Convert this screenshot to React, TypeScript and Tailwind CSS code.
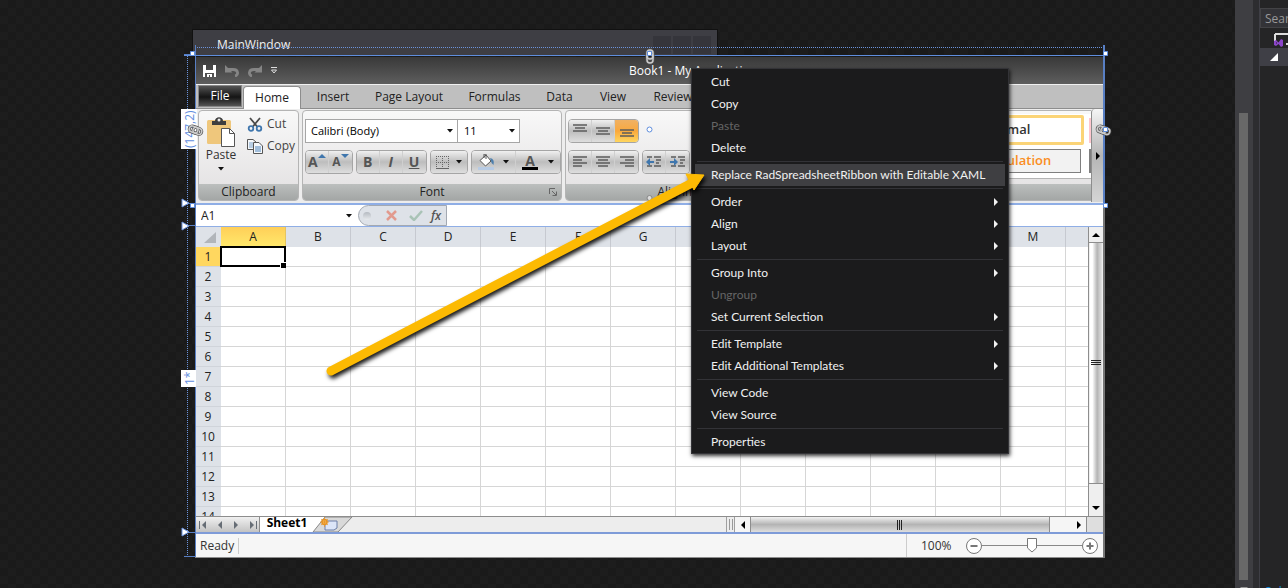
import { useState, type ReactNode } from 'react';

const COLUMNS = ['A', 'B', 'C', 'D', 'E', 'F', 'G', 'H', 'I', 'J', 'K', 'L', 'M', ''];
const ROWS = Array.from({ length: 14 }, (_, i) => i + 1);
const TABS = [
  { name: 'Insert', width: 'w-[62px]' },
  { name: 'Page Layout', width: 'w-[90px]' },
  { name: 'Formulas', width: 'w-[81px]' },
  { name: 'Data', width: 'w-[49px]' },
  { name: 'View', width: 'w-[58px]' },
  { name: 'Review', width: 'w-[62px]' },
];

type MenuEntry = { label: string; disabled?: boolean; submenu?: boolean; active?: boolean };

const MENU: MenuEntry[][] = [
  [{ label: 'Cut' }, { label: 'Copy' }, { label: 'Paste', disabled: true }, { label: 'Delete' }],
  [{ label: 'Replace RadSpreadsheetRibbon with Editable XAML', active: true }],
  [
    { label: 'Order', submenu: true },
    { label: 'Align', submenu: true },
    { label: 'Layout', submenu: true },
  ],
  [
    { label: 'Group Into', submenu: true },
    { label: 'Ungroup', disabled: true },
    { label: 'Set Current Selection', submenu: true },
  ],
  [
    { label: 'Edit Template', submenu: true },
    { label: 'Edit Additional Templates', submenu: true },
  ],
  [{ label: 'View Code' }, { label: 'View Source' }],
  [{ label: 'Properties' }],
];

function Triangle({ dir, className = '' }: { dir: 'up' | 'down' | 'left' | 'right'; className?: string }) {
  const paths = {
    up: 'M0 6 L4 2 L8 6Z',
    down: 'M0 2 L8 2 L4 6Z',
    left: 'M6 0 L2 4 L6 8Z',
    right: 'M2 0 L6 4 L2 8Z',
  };
  return (
    <svg viewBox="0 0 8 8" className={`w-2 h-2 shrink-0 ${className}`} fill="currentColor">
      <path d={paths[dir]} />
    </svg>
  );
}

function DropArrow() {
  return (
    <svg viewBox="0 0 6 4" className="w-[6px] h-1 shrink-0" fill="#111">
      <path d="M0 0H6L3 3.5Z" />
    </svg>
  );
}

function ToolGroup({ children }: { children: ReactNode }) {
  return (
    <div className="flex h-6 rounded-sm border border-[#a5a5a5] divide-x divide-[#cfcfcf] overflow-hidden">
      {children}
    </div>
  );
}

function Tool({ label, children, className = 'w-[23px]' }: { label: string; children: ReactNode; className?: string }) {
  return (
    <button
      aria-label={label}
      className={`flex items-center justify-center bg-linear-to-b from-[#f0f0f0] from-0% via-[#bdbdbd] via-50% to-[#dedede] ${className}`}
    >
      {children}
    </button>
  );
}

function Lines({ d }: { d: string }) {
  return (
    <svg viewBox="0 0 16 14" className="w-4 h-[14px]" stroke="#5c5c5c" strokeWidth="1.4" fill="none">
      <path d={d} />
    </svg>
  );
}

function Group({ title, className, launcher, children }: { title: string; className: string; launcher?: boolean; children: ReactNode }) {
  return (
    <section
      className={`flex flex-col h-[91px] rounded-sm border border-[#b4b4b4] bg-linear-to-b from-[#f8f8f8] to-[#e2e0e1] overflow-hidden ${className}`}
    >
      <div className="flex-1 min-h-0">{children}</div>
      <div className="relative h-4 shrink-0 flex items-center justify-center bg-linear-to-b from-[#bcbfbe] to-[#a3a6a5] text-[#222] whitespace-nowrap">
        {title}
        {launcher && (
          <svg viewBox="0 0 8 8" className="absolute right-1 w-2 h-2" stroke="#666" fill="none">
            <path d="M.5 6V.5H6M3 3L7 7M7.5 3.5V7.5H3.5" />
          </svg>
        )}
      </div>
    </section>
  );
}

function TitleBar() {
  return (
    <div className="relative h-7 flex items-center pl-2 gap-[9px] bg-linear-to-b from-[#393939] to-[#5e5e5e] border-b border-[#f0f0f0]">
      <button aria-label="Save">
        <svg viewBox="0 0 13 12" className="w-[13px] h-3" fill="#fff">
          <path d="M0 0H3V5H10V0H13V12H11V8H2V12H0ZM4 9H9V12H7V10H6V12H4Z" />
        </svg>
      </button>
      <button aria-label="Undo">
        <svg viewBox="0 0 14 12" className="w-[14px] h-3" fill="none" stroke="#858585" strokeWidth="2.8">
          <path d="M3 4.5H8C14 4.500 13.500 10.500 10 11" />
          <path d="M0 0V7.500H7.500Z" fill="#858585" stroke="none" />
        </svg>
      </button>
      <button aria-label="Redo">
        <svg viewBox="0 0 14 12" className="w-[14px] h-3" fill="none" stroke="#858585" strokeWidth="2.8">
          <path d="M11 4.500H6C0 4.500 .5 10.500 4 11" />
          <path d="M14 0V7.500H6.500Z" fill="#858585" stroke="none" />
        </svg>
      </button>
      <button aria-label="Customize toolbar">
        <svg viewBox="0 0 6 7" className="w-[6px] h-[7px]" fill="none" stroke="#ddd">
          <path d="M0 .5H6M.5 3H5.500L3 6Z" />
        </svg>
      </button>
      <h1 className="absolute inset-x-0 pl-[88px] text-center text-white">Book1 - My Application</h1>
    </div>
  );
}

function RibbonTabs() {
  return (
    <div role="tablist" className="flex items-end h-6 pl-[3px] bg-[#bfbfbf] border-b border-[#8d8d8d]">
      <button role="tab" className="w-11 h-[22px] mr-px mb-px text-white bg-linear-to-b from-[#555] from-0% via-[#151515] via-55% to-[#555] border border-[#888]">
        File
      </button>
      <button role="tab" aria-selected="true" className="w-[58px] h-[23px] -mb-px mr-px rounded-t-sm border border-b-0 border-[#8d8d8d] bg-white text-[#222]">
        Home
      </button>
      {TABS.map((tab) => (
        <button key={tab.name} role="tab" className={`h-[22px] text-[#222] text-center whitespace-nowrap ${tab.width}`}>
          {tab.name}
        </button>
      ))}
    </div>
  );
}

function Ribbon() {
  return (
    <div className="flex h-[94px] pl-[3px] pt-px bg-[#ededed] overflow-hidden">
      <Group title="Clipboard" className="w-[101px] mr-[3px] shrink-0">
        <div className="flex pl-2 pt-[5px]">
          <button className="flex flex-col items-center w-7 text-[#333]">
            <svg viewBox="0 0 28 31" className="w-7 h-[31px]">
              <rect x="0" y="4" width="24" height="24" rx="1.500" fill="#efc77c" />
              <path d="M5 9V5H8C8 0 16 0 16 5H19V9Z" fill="#3f3f3f" />
              <circle cx="12" cy="4" r="1.500" fill="#eee" />
              <path d="M14.500 12.500H22.500L27.500 17.500V30.500H14.500Z" fill="#fff" stroke="#555" />
              <path d="M22.500 12.500V17.500H27.500" fill="none" stroke="#555" />
            </svg>
            <span className="leading-4 mb-1">Paste</span>
            <DropArrow />
          </button>
          <div className="flex flex-col ml-3 gap-[6px]">
            <button className="flex items-center gap-1 h-4 text-[#444]">
              <svg viewBox="0 0 16 15" className="w-4 h-[15px]" fill="none" strokeWidth="1.800">
                <path d="M3 1L10.500 10M13 1L5.500 10" stroke="#4a4a4a" />
                <circle cx="4" cy="11.500" r="2.300" stroke="#3f76ad" />
                <circle cx="12" cy="11.500" r="2.300" stroke="#3f76ad" />
              </svg>
              Cut
            </button>
            <button className="flex items-center gap-1 h-4 text-[#444]">
              <svg viewBox="0 0 16 15" className="w-4 h-[15px]" fill="#f5f8fb" stroke="#555">
                <path d="M.5 .5H6L9.500 3.500V10.500H.5Z" />
                <path d="M2 4H6M2 6H6M2 8H6" stroke="#7aa3cc" />
                <path d="M6.500 3.500H12L15.500 7V14.500H6.500Z" />
                <path d="M8 8H14M8 10H14M8 12H14" stroke="#4c83bb" />
              </svg>
              Copy
            </button>
          </div>
        </div>
      </Group>

      <Group title="Font" launcher className="w-[260px] mr-[3px] shrink-0">
        <div className="flex pl-[2px] pt-2 text-[11px]">
          <label className="flex items-center w-[153px] h-6 pr-1 bg-white border border-[#a6a6a6]">
            <select aria-label="Font family" className="appearance-none flex-1 min-w-0 pl-[5px] outline-none text-black">
              <option>Calibri (Body)</option>
            </select>
            <DropArrow />
          </label>
          <label className="flex items-center w-[63px] h-6 pr-1 -ml-px bg-white border border-[#a6a6a6]">
            <select aria-label="Font size" className="appearance-none flex-1 min-w-0 pl-[6px] outline-none text-black">
              <option>11</option>
            </select>
            <DropArrow />
          </label>
        </div>
        <div className="flex gap-[3px] pl-[2px] pt-[7px] font-bold text-sm text-[#555]">
          <ToolGroup>
            <Tool label="Grow font">
              A<Triangle dir="up" className="text-[#3f76ad] -mt-3" />
            </Tool>
            <Tool label="Shrink font">
              <span className="text-xs">A</span>
              <Triangle dir="down" className="text-[#3f76ad] -mt-3" />
            </Tool>
          </ToolGroup>
          <ToolGroup>
            <Tool label="Bold">B</Tool>
            <Tool label="Italic"><i>I</i></Tool>
            <Tool label="Underline"><u>U</u></Tool>
          </ToolGroup>
          <ToolGroup>
            <Tool label="Borders" className="w-[37px] gap-[7px]">
              <svg viewBox="0 0 13 13" className="w-[13px] h-[13px]" fill="none" stroke="#666">
                <path d="M.5 0V12M12.500 0V12M6.500 0V12M0 .5H13M0 6.500H13" strokeDasharray="1 1" />
                <path d="M0 12.500H13" />
              </svg>
              <DropArrow />
            </Tool>
          </ToolGroup>
          <ToolGroup>
            <Tool label="Fill color" className="w-[44px] gap-2">
              <svg viewBox="0 0 17 16" className="w-[17px] h-4">
                <path d="M8 1L13 7L7.500 12L2 6.500Z" fill="#fff" stroke="#555" />
                <path d="M6 4V0H8V5" fill="none" stroke="#555" />
                <path d="M12 4Q17 5 15.500 11Q13 9 13 7Z" fill="#4c7fae" />
                <rect x="0" y="13" width="16" height="3" fill="#b7cbe4" />
              </svg>
              <DropArrow />
            </Tool>
            <Tool label="Font color" className="w-[44px] gap-[10px]">
              <span className="leading-[13px] border-b-3 border-black px-[3px]">A</span>
              <DropArrow />
            </Tool>
          </ToolGroup>
        </div>
      </Group>

      <Group title="Alignment" className="w-[242px] mr-1 shrink-0">
        <div className="flex pl-[2px] pt-2">
          <ToolGroup>
            <Tool label="Top align"><Lines d="M1 1H15M3 4H13M1 7H15" /></Tool>
            <Tool label="Middle align"><Lines d="M1 4H15M3 7H13M1 10H15" /></Tool>
            <button aria-label="Bottom align" className="flex items-center justify-center w-[23px] bg-linear-to-b from-[#f0b163] via-[#f9a83c] to-[#ffd65e]">
              <Lines d="M1 6H15M3 9H13M1 12H15" />
            </button>
          </ToolGroup>
        </div>
        <div className="flex gap-[3px] pl-[2px] pt-[7px]">
          <ToolGroup>
            <Tool label="Align left"><Lines d="M1 2H15M1 5H10M1 8H15M1 11H10" /></Tool>
            <Tool label="Align center"><Lines d="M1 2H15M3 5H13M1 8H15M3 11H13" /></Tool>
            <Tool label="Align right"><Lines d="M1 2H15M6 5H15M1 8H15M6 11H15" /></Tool>
          </ToolGroup>
          <ToolGroup>
            <Tool label="Decrease indent">
              <Lines d="M1 2H6M8 2H15M10 5H15M10 8H13M1 11H6M8 11H15" />
              <svg viewBox="0 0 8 8" className="absolute w-2 h-2 mr-2" fill="#3f76ad"><path d="M0 4L4 0V3H8V5H4V8Z" /></svg>
            </Tool>
            <Tool label="Increase indent">
              <Lines d="M1 2H6M8 2H15M10 5H15M10 8H13M1 11H6M8 11H15" />
              <svg viewBox="0 0 8 8" className="absolute w-2 h-2 mr-2" fill="#3f76ad"><path d="M8 4L4 0V3H0V5H4V8Z" /></svg>
            </Tool>
          </ToolGroup>
        </div>
      </Group>

      <Group title="Styles" className="flex-1 rounded-r-none border-r-0">
        <div className="flex justify-end gap-[5px] mt-[3px] h-[65px] bg-white border-b border-[#b4b4b4]">
          <div className="flex flex-col gap-1 pt-px w-[108px] text-[13px]">
            <button className="h-[30px] pl-1 rounded-xs text-left font-semibold bg-white border-3 border-[#fbd477] text-[#333]">Normal</button>
            <button className="h-6 w-[105px] pl-1 text-left font-semibold bg-[#f2f2f2] border border-[#7f7f7f] text-[#fa8d22]">Calculation</button>
          </div>
          <div className="flex flex-col gap-[6px] pt-1 w-[2px]">
            <span className="h-[25px] bg-[#ffc7ce]" />
            <span className="h-6 bg-[#7f7f7f]" />
          </div>
        </div>
      </Group>
      <button aria-label="Scroll ribbon right" className="flex items-center justify-center w-3 h-[93px] -mt-px rounded-t-sm border-l border-[#8d8d8d] text-black bg-linear-to-b from-[#f5f5f5] from-0% via-[#b5b5b5] via-50% to-[#d5d5d5]">
        <Triangle dir="right" />
      </button>
    </div>
  );
}

function FormulaBar() {
  return (
    <div className="flex items-center h-6 bg-white border-y border-[#8faee6] border-t-2">
      <label className="flex items-center w-[163px] pl-[6px] pr-[6px]">
        <input aria-label="Name box" defaultValue="A1" className="flex-1 min-w-0 outline-none text-[#222]" />
        <DropArrow />
      </label>
      <div className="flex items-center w-[89px] h-full pl-1 rounded-l-full border border-[#a3a9b2] bg-[#dee2e8]">
        <span className="w-2 h-2 mr-[15px] rounded-full bg-linear-to-b from-[#b5bac1] to-[#e8ebee]" />
        <button aria-label="Cancel" className="mr-3">
          <svg viewBox="0 0 11 11" className="w-[11px] h-[11px]" stroke="#e29a8e" strokeWidth="2.500"><path d="M1 1L10 10M10 1L1 10" /></svg>
        </button>
        <button aria-label="Enter" className="mr-2">
          <svg viewBox="0 0 14 11" className="w-[14px] h-[11px]" fill="none" stroke="#a9c3b6" strokeWidth="2.500"><path d="M1 6L5 10L13 1" /></svg>
        </button>
        <button aria-label="Insert function" className="italic font-semibold text-[#555]">fx</button>
      </div>
      <input aria-label="Formula" className="flex-1 min-w-0 outline-none" />
    </div>
  );
}

function Sheet() {
  return (
    <div className="flex h-[290px] bg-white overflow-hidden border-b border-[#8d8d8d]">
      <div className="flex-1 min-w-0 overflow-hidden">
        <table className="table-fixed w-0 border-separate border-spacing-0 text-[#222] leading-4">
          <thead>
            <tr className="h-5">
              <th aria-label="Select all" className="w-[26px] p-0 bg-[#dee2e8]">
                <svg viewBox="0 0 12 11" className="w-3 h-[11px] ml-[9px]" fill="#b1b5ba"><path d="M12 0V11H0Z" /></svg>
              </th>
              {COLUMNS.map((col) => (
                <th
                  key={col}
                  scope="col"
                  className={`w-[65px] p-0 font-normal border-r ${
                    col === 'A' ? 'bg-linear-to-b from-[#ffcf58] to-[#ffe96c] border-[#e5c460]' : 'bg-[#dee2e8] border-[#c6c9d0]'
                  }`}
                >
                  {col}
                </th>
              ))}
            </tr>
          </thead>
          <tbody>
            {ROWS.map((row) => (
              <tr key={row} className="h-5">
                <th scope="row" className={`p-0 font-normal border-b border-[#d0d4da] ${row === 1 ? 'bg-[#ffd75f]' : 'bg-[#dee2e8]'}`}>
                  {row}
                </th>
                {COLUMNS.map((col) => (
                  <td key={col} className="p-0 border-r border-b border-[#d6d6d6]">
                    {row === 1 && col === 'A' && (
                      <div className="relative h-[21px] w-[66px] -mt-px -mb-px -ml-px border-2 border-black">
                        <span className="absolute -right-[2px] -bottom-[3px] w-[6px] h-[6px] bg-black border-t border-l border-white" />
                      </div>
                    )}
                  </td>
                ))}
              </tr>
            ))}
          </tbody>
        </table>
      </div>
      <div className="flex flex-col w-[15px] border-l border-[#8d8d8d] bg-[#efefef] text-black">
        <button aria-label="Scroll up" className="flex items-center justify-center h-4 shrink-0 border-b border-[#8d8d8d]"><Triangle dir="up" /></button>
        <div className="flex-1 flex items-center justify-center mx-[1px] bg-linear-to-r from-[#fff] from-20% via-[#b4b4b4] via-60% to-[#e4e4e4]">
          <svg viewBox="0 0 10 6" className="w-[10px] h-[6px]" stroke="#222"><path d="M0 .5H10M0 2.500H10M0 4.500H10" /></svg>
        </div>
        <button aria-label="Scroll down" className="flex items-end justify-center pb-1 h-[33px] shrink-0 border-t border-[#8d8d8d]"><Triangle dir="down" /></button>
      </div>
    </div>
  );
}

function SheetTabs() {
  return (
    <div className="flex h-[15px] bg-[#ededed]">
      <div className="flex items-center w-[65px] px-1 gap-2 text-[#666d75] bg-linear-to-b from-[#f0f0f0] to-[#c3c3c3] border-r border-[#8d8d8d]">
        <button aria-label="First sheet" className="flex items-center"><span className="w-px h-2 bg-current" /><Triangle dir="left" /></button>
        <button aria-label="Previous sheet"><Triangle dir="left" /></button>
        <button aria-label="Next sheet"><Triangle dir="right" /></button>
        <button aria-label="Last sheet" className="flex items-center"><Triangle dir="right" /><span className="w-px h-2 bg-current" /></button>
      </div>
      <button className="flex items-start justify-center w-[54px] bg-white font-bold leading-3 text-black">Sheet1</button>
      <button aria-label="New sheet">
        <svg viewBox="0 0 44 15" className="w-11 h-[15px] -ml-[2px]">
          <path d="M0 0H13L1 15H0Z" fill="#fff" />
          <path d="M13 0H40L26 15H1Z" fill="#d9d9d9" stroke="#888" />
          <path d="M13 4H25V11L22 13H13Z" fill="#dce5f8" stroke="#6c7fa8" />
          <circle cx="12.500" cy="5" r="2.500" fill="#ffd48a" stroke="#e89322" strokeWidth="1.500" />
          <path d="M12.500 0V10M8 5H17M9 2L16 8M16 2L9 8" stroke="#e89322" strokeWidth=".7" />
        </svg>
      </button>
      <div className="flex-1" />
      <div className="w-[9px] flex justify-center gap-[2px] border-x border-[#a0a0a0] py-[2px]">
        <span className="w-px bg-[#999]" />
        <span className="w-px bg-[#999]" />
      </div>
      <button aria-label="Scroll left" className="flex items-center justify-center w-[15px] text-black bg-[#f5f5f5]"><Triangle dir="left" /></button>
      <div className="flex items-center justify-center w-[300px] border-x border-[#8d8d8d] bg-linear-to-b from-[#f2f2f2] from-0% via-[#b4b4b4] via-50% to-[#dedede]">
        <svg viewBox="0 0 6 10" className="w-[6px] h-[10px]" stroke="#222"><path d="M.5 0V10M2.500 0V10M4.500 0V10" /></svg>
      </div>
      <button aria-label="Scroll right" className="flex items-center justify-end pr-[3px] w-[37px] text-black bg-[#f5f5f5] border-r border-[#8d8d8d]"><Triangle dir="right" /></button>
      <div className="w-4 bg-[#dedede]" />
    </div>
  );
}

function StatusBar() {
  const [zoom, setZoom] = useState(50);

  return (
    <div className="flex items-center h-[26px] bg-[#f6f6f6] border-t-2 border-t-[#7e9bd8] border-b border-b-[#8d8d8d] text-[#333]">
      <span className="pl-[5px] pr-1 h-4 leading-4 border-r border-[#ccc]">Ready</span>
      <div className="flex-1" />
      <div className="flex items-center h-full w-[197px] pl-[14px] border-l border-[#ccc]">
        <span className="w-[45px]">100%</span>
        <button aria-label="Zoom out">
          <svg viewBox="0 0 16 16" className="w-4 h-4" fill="#fff" stroke="#777"><circle cx="8" cy="8" r="7.500" /><path d="M4.500 8H11.500" strokeWidth="2" /></svg>
        </button>
        <div className="relative flex items-center w-[100px] h-4">
          <span className="w-full h-px bg-[#888]" />
          <svg viewBox="0 0 10 15" className="absolute left-[45px] w-[10px] h-[15px]" fill="#fff" stroke="#777"><path d="M.5 .5H9.500V10L5 14L.5 10Z" /></svg>
          <input
            type="range"
            aria-label="Zoom"
            value={zoom}
            onChange={(e) => setZoom(Number(e.target.value))}
            className="absolute inset-0 w-full opacity-0"
          />
        </div>
        <button aria-label="Zoom in">
          <svg viewBox="0 0 16 16" className="w-4 h-4" fill="#fff" stroke="#777"><circle cx="8" cy="8" r="7.500" /><path d="M4.500 8H11.500M8 4.500V11.500" strokeWidth="2" /></svg>
        </button>
      </div>
    </div>
  );
}

function ContextMenu() {
  return (
    <div role="menu" className="absolute left-[691px] top-[68px] w-[318px] pt-[2px] px-[3px] bg-[#1b1b1c] border border-[#333337] font-[Lato,'Open_Sans',sans-serif] text-[#f1f1f1] shadow-[1px_2px_4px_rgba(0,0,0,0.8)]">
      {MENU.map((section, i) => (
        <div key={section[0].label}>
          {i > 0 && <div className="h-px my-[2px] mx-[2px] bg-[#333337]" />}
          {section.map((item) => (
            <button
              key={item.label}
              role="menuitem"
              disabled={item.disabled}
              className={`flex items-center justify-between w-full h-[22px] pl-4 pr-[5px] whitespace-nowrap ${
                item.active ? 'bg-[#3f3f42]' : ''
              } ${item.disabled ? 'text-[#656565]' : ''}`}
            >
              {item.label}
              {item.submenu && <Triangle dir="right" />}
            </button>
          ))}
        </div>
      ))}
    </div>
  );
}

// One chain link mark, drawn around its own centre
function Link({ x, y, upright }: { x: number; y: number; upright?: boolean }) {
  return (
    <g transform={`translate(${x} ${y}) rotate(${upright ? 90 : 20})`} fill="none">
      <rect x="-6" y="-3" width="9" height="6" rx="3" stroke="#555" strokeWidth="3" />
      <rect x="-2" y="-3" width="9" height="6" rx="3" stroke="#555" strokeWidth="3" />
      <rect x="-6" y="-3" width="9" height="6" rx="3" stroke="#ccc" strokeWidth="1.5" />
      <rect x="-2" y="-3" width="9" height="6" rx="3" stroke="#ccc" strokeWidth="1.5" />
    </g>
  );
}

// Selection handles, grid rails and row size labels drawn over the design surface
function Adorners() {
  return (
    <svg className="absolute inset-0 w-full h-full pointer-events-none" fill="none">
      <g stroke="#587fc4">
        <path d="M195 47.500H1103M187.500 56V556" stroke="#6b93dc" strokeDasharray="1 1" />
        <path d="M195.500 45V557M184 54.500H192M184 556.500H195" />
        <path d="M184 55.500H1104" stroke="#5f8ede" />
        <path d="M1104 45V205" strokeWidth="2" />
        <path d="M187 203.500H195M187 225.500H195M187 532.500H195" />
      </g>
      <path d="M182 199L189 203L182 207ZM182 222L189 226L182 230ZM182 528L189 532L182 536Z" fill="#fff" stroke="#6c93dd" />
      <rect x="181" y="109" width="16" height="40" fill="#fff" />
      <rect x="181" y="370" width="15" height="17" fill="#fff" />
      <g fill="#5f8ede" fontSize="12">
        <text transform="translate(194 148) rotate(-90)">(147,2)</text>
        <text transform="translate(194 385) rotate(-90)">1*</text>
      </g>
      <Link x={195} y={130} />
      <Link x={1103} y={130} />
      <Link x={650} y={56} upright />
      <g fill="#fff" stroke="#5f8ede">
        <path d="M190.500 51.500H194.500V55.500H190.500ZM1103.500 51.500H1107.500V55.500H1103.500ZM190.500 203.500H194.500V207.500H190.500ZM1103.500 203.500H1107.500V207.500H1103.500ZM1103.500 127.500H1107.500V131.500H1103.500ZM647.500 51.500H651.500V55.500H647.500Z" />
        <circle cx="649.500" cy="129.500" r="2.500" />
      </g>
      <circle cx="649.500" cy="198" r="2.500" stroke="#888" fill="#ddd" />
    </svg>
  );
}

function Arrow() {
  return (
    <svg className="absolute inset-0 w-full h-full pointer-events-none">
      <g className="drop-shadow-[2px_3px_2px_rgba(0,0,0,0.9)]">
        <path d="M331 371L692 183" stroke="#fcba03" strokeWidth="9" strokeLinecap="round" />
        <path d="M704 175L686 174L694 190Z" fill="#fcba03" stroke="#fcba03" strokeLinejoin="round" />
      </g>
    </svg>
  );
}

export default function App() {
  return (
    <div className="flex h-screen overflow-hidden bg-[#2d2d30] font-['Open_Sans','Noto_Sans',sans-serif] text-xs">
      <main className="relative flex-1 min-w-0 pt-[29px] bg-[repeating-conic-gradient(#1a1a1a_0_25%,#1d1d1d_0_50%)] bg-[length:16px_16px]">
        <div className="flex items-center justify-between h-[26px] w-[526px] ml-[192px] pl-6 pr-[6px] pt-1 bg-[#3e3e44] border border-b-0 border-[#111] text-[#f1f1f1]">
          <span>MainWindow</span>
          <div className="flex gap-[2px]">
            <span className="w-[18px] h-[18px] bg-[#35353b]" />
            <span className="w-[18px] h-[18px] bg-[#35353b]" />
            <span className="w-[18px] h-[18px] bg-[#35353b]" />
          </div>
        </div>
        <div className="ml-[195px] mr-[130px] pt-[2px] border-r-2 border-[#777]">
          <TitleBar />
          <RibbonTabs />
          <Ribbon />
          <FormulaBar />
          <Sheet />
          <SheetTabs />
          <StatusBar />
        </div>
        <Adorners />
        <ContextMenu />
        <Arrow />
      </main>
      <div className="flex flex-col items-center w-[18px] pt-[113px] bg-[#3e3e42]">
        <div className="w-[9px] flex-1 mr-[1px] bg-[#686868]" />
        <div className="h-2 pt-[5px] text-[#999]"><Triangle dir="down" /></div>
      </div>
      <aside className="flex flex-col w-[29px] ml-[6px] border-l border-[#3f3f46] bg-[#252526] overflow-hidden">
        <input aria-label="Search" placeholder="Search" className="h-5 mt-2 w-[60px] pl-1 bg-[#333337] border border-[#434346] placeholder:text-[#999] outline-none" />
        <div className="h-5 pl-[14px] pt-[5px]">
          <svg viewBox="0 0 16 15" className="w-4 h-[15px]">
            <path d="M1 1H16M1 1V8M12 11H16" stroke="#ddd" strokeWidth="2" fill="none" />
            <path d="M0 8L2 7L4.500 9.500L7 6L9 7V13L7 14L4.500 11L2 13L0 12ZM2 9V11L3 10Z" fill="#8b45c9" />
          </svg>
        </div>
        <div className="h-[18px] pl-[10px] pt-[5px] bg-[#3f3f46]">
          <svg viewBox="0 0 8 8" className="w-2 h-2" fill="#fff"><path d="M8 0V8H0Z" /></svg>
        </div>
        <a href="#solution" className="mt-auto h-1 pl-[5px] leading-4 whitespace-nowrap text-[#0e8ad8]">Solution</a>
      </aside>
    </div>
  );
}
